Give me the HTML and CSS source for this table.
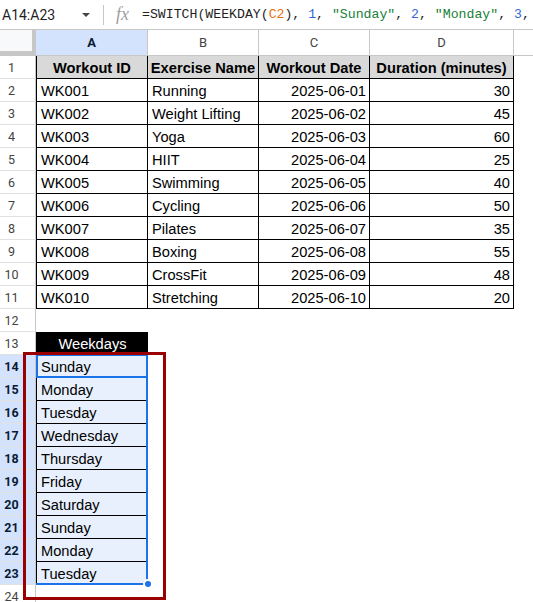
FILE: index.html
```html
<!DOCTYPE html>
<html>
<head>
<meta charset="utf-8">
<link rel="stylesheet" href="styles.css">
</head>
<body>
<div class="app">
  <div class="formula-bar">
    <div class="namebox"><span class="ref">A14:A23</span><span class="caret"></span></div>
    <div class="sep"></div>
    <div class="fx">fx</div>
    <div class="formula">=SWITCH(WEEKDAY(<span class="f-ref">C2</span>),<span class="f-num"> 1</span>,<span class="f-str"> "Sunday"</span>,<span class="f-num"> 2</span>,<span class="f-str"> "Monday"</span>,<span class="f-num"> 3</span>,</div>
  </div>
  <div class="sheet">
    <div class="corner"></div><div class="ch sel">A</div><div class="ch">B</div><div class="ch">C</div><div class="ch">D</div><div class="ch last"></div>

    <div class="rh">1</div><div class="t first h">Workout ID</div><div class="t h">Exercise Name</div><div class="t h">Workout Date</div><div class="t h">Duration (minutes)</div><div class="c"></div>
    <div class="rh">2</div><div class="t first">WK001</div><div class="t">Running</div><div class="t r">2025-06-01</div><div class="t r">30</div><div class="c"></div>
    <div class="rh">3</div><div class="t first">WK002</div><div class="t">Weight Lifting</div><div class="t r">2025-06-02</div><div class="t r">45</div><div class="c"></div>
    <div class="rh">4</div><div class="t first">WK003</div><div class="t">Yoga</div><div class="t r">2025-06-03</div><div class="t r">60</div><div class="c"></div>
    <div class="rh">5</div><div class="t first">WK004</div><div class="t">HIIT</div><div class="t r">2025-06-04</div><div class="t r">25</div><div class="c"></div>
    <div class="rh">6</div><div class="t first">WK005</div><div class="t">Swimming</div><div class="t r">2025-06-05</div><div class="t r">40</div><div class="c"></div>
    <div class="rh">7</div><div class="t first">WK006</div><div class="t">Cycling</div><div class="t r">2025-06-06</div><div class="t r">50</div><div class="c"></div>
    <div class="rh">8</div><div class="t first">WK007</div><div class="t">Pilates</div><div class="t r">2025-06-07</div><div class="t r">35</div><div class="c"></div>
    <div class="rh">9</div><div class="t first">WK008</div><div class="t">Boxing</div><div class="t r">2025-06-08</div><div class="t r">55</div><div class="c"></div>
    <div class="rh">10</div><div class="t first">WK009</div><div class="t">CrossFit</div><div class="t r">2025-06-09</div><div class="t r">48</div><div class="c"></div>
    <div class="rh">11</div><div class="t first">WK010</div><div class="t">Stretching</div><div class="t r">2025-06-10</div><div class="t r">20</div><div class="c"></div>
    <div class="rh">12</div><div class="c"></div><div class="c"></div><div class="c"></div><div class="c"></div><div class="c"></div>
    <div class="rh">13</div><div class="wh">Weekdays</div><div class="c"></div><div class="c"></div><div class="c"></div><div class="c"></div>
    <div class="rh sel">14</div><div class="wd">Sunday</div><div class="c"></div><div class="c"></div><div class="c"></div><div class="c"></div>
    <div class="rh sel">15</div><div class="wd">Monday</div><div class="c"></div><div class="c"></div><div class="c"></div><div class="c"></div>
    <div class="rh sel">16</div><div class="wd">Tuesday</div><div class="c"></div><div class="c"></div><div class="c"></div><div class="c"></div>
    <div class="rh sel">17</div><div class="wd">Wednesday</div><div class="c"></div><div class="c"></div><div class="c"></div><div class="c"></div>
    <div class="rh sel">18</div><div class="wd">Thursday</div><div class="c"></div><div class="c"></div><div class="c"></div><div class="c"></div>
    <div class="rh sel">19</div><div class="wd">Friday</div><div class="c"></div><div class="c"></div><div class="c"></div><div class="c"></div>
    <div class="rh sel">20</div><div class="wd">Saturday</div><div class="c"></div><div class="c"></div><div class="c"></div><div class="c"></div>
    <div class="rh sel">21</div><div class="wd">Sunday</div><div class="c"></div><div class="c"></div><div class="c"></div><div class="c"></div>
    <div class="rh sel">22</div><div class="wd">Monday</div><div class="c"></div><div class="c"></div><div class="c"></div><div class="c"></div>
    <div class="rh sel">23</div><div class="wd">Tuesday</div><div class="c"></div><div class="c"></div><div class="c"></div><div class="c"></div>
    <div class="rh">24</div><div class="c"></div><div class="c"></div><div class="c"></div><div class="c"></div><div class="c"></div>

    <div class="range"></div>
    <div class="active"></div>
    <div class="handle"></div>
    <div class="frame"></div>
  </div>
</div>
</body>
</html>
```

FILE: styles.css
```css
* { box-sizing: border-box; }
html, body {
  margin: 0;
  padding: 0;
  background: #fff;
  overflow: hidden;
}
.app {
  width: 533px;
  height: 602px;
  overflow: hidden;
  font-family: "Liberation Sans", Arial, sans-serif;
}
.formula-bar {
  height: 30px;
  display: flex;
  align-items: center;
  border-bottom: 1px solid #c7c7c7;
  white-space: nowrap;
  overflow: hidden;
}
.namebox {
  flex: 0 0 103px;
  display: flex;
  align-items: center;
  padding-left: 2px;
  font-family: Roboto, sans-serif;
  font-size: 14px;
  color: #1f1f1f;
}
.caret {
  margin-left: auto;
  margin-right: 13px;
  width: 0;
  height: 0;
  border-left: 4px solid transparent;
  border-right: 4px solid transparent;
  border-top: 4px solid #444;
}
.sep {
  flex: 0 0 1px;
  height: 20px;
  background: #c7c7c7;
}
.fx {
  flex: 0 0 26px;
  margin-left: 12px;
  font-family: "Liberation Serif", serif;
  font-style: italic;
  font-size: 18px;
  color: #9e9e9e;
}
.formula {
  flex: 0 0 auto;
  font-family: "Liberation Mono", monospace;
  font-size: 13.2px;
  color: #1f1f1f;
}
.f-ref { color: #e8710a; }
.f-num { color: #3367d6; }
.f-str { color: #188038; }

.sheet {
  position: relative;
  display: grid;
  grid-template-columns: 36px 112px 111px 111px 144px 1fr;
  grid-template-rows: 26px repeat(24, 23px);
}
.corner {
  background: #f8f9fa;
  border-right: 4px solid #c7c7c7;
  border-bottom: 5px solid #c7c7c7;
}
.ch {
  display: flex;
  align-items: center;
  justify-content: center;
  font-family: Roboto, sans-serif;
  font-size: 13px;
  color: #444;
  background: #fff;
  border-right: 1px solid #c7c7c7;
  border-bottom: 1px solid #c7c7c7;
}
.ch.sel {
  background: #d3e3fd;
  color: #0b1a33;
  font-weight: 700;
}
.ch.last { border-right: none; }
.rh {
  display: flex;
  align-items: center;
  justify-content: center;
  padding-right: 12px;
  font-family: Roboto, sans-serif;
  font-size: 12.5px;
  color: #444;
  background: #fff;
  border-right: 1px solid #c7c7c7;
  border-bottom: 1px solid #e1e1e1;
}
.rh.sel {
  background: #d3e3fd;
  color: #0b1a33;
  font-weight: 700;
}
.c { background: #fff; }
.t, .wd, .wh {
  display: flex;
  align-items: flex-end;
  padding: 0 3px 1px 4px;
  font-size: 14.67px;
  line-height: 17px;
  color: #000;
  white-space: nowrap;
  overflow: hidden;
  border-right: 1px solid #000;
  border-bottom: 1px solid #000;
}
.t.first, .wd, .wh { border-left: 1px solid #000; }
.t.h {
  background: #d9d9d9;
  font-weight: 700;
  justify-content: center;
  padding-left: 2px;
  padding-right: 2px;
}
.t.r { justify-content: flex-end; }
.wh {
  background: #000;
  color: #fff;
  justify-content: center;
}
.wd { background: #e8f0fe; }

.range {
  position: absolute;
  left: 36px;
  top: 324px;
  width: 112px;
  height: 231px;
  border-right: 2px solid #1a73e8;
  border-bottom: 2px solid #1a73e8;
}
.active {
  position: absolute;
  left: 36px;
  top: 324px;
  width: 112px;
  height: 24px;
  border: 2px solid #1a73e8;
}
.handle {
  position: absolute;
  left: 143px;
  top: 549px;
  width: 10px;
  height: 10px;
  border-radius: 50%;
  background: #1a73e8;
  border: 2px solid #fff;
}
.frame {
  position: absolute;
  left: 23px;
  top: 322px;
  width: 143px;
  height: 248px;
  border: 3px solid #9a0000;
}
```
